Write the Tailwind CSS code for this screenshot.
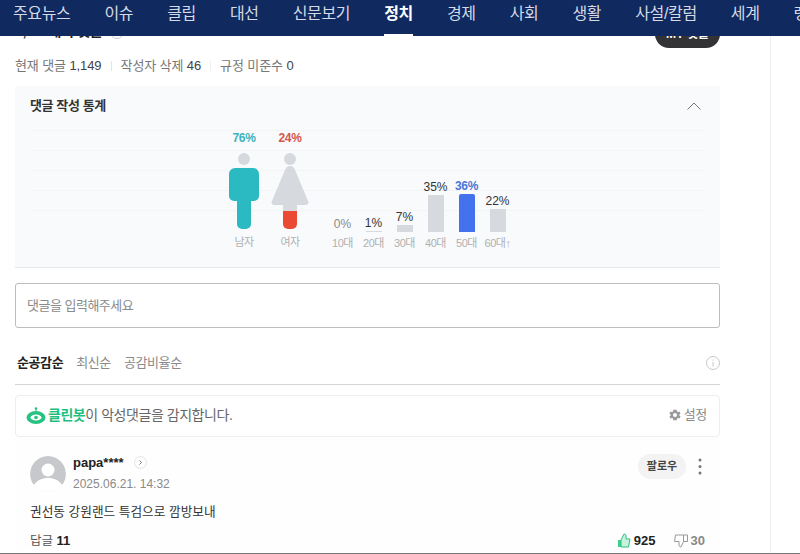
<!DOCTYPE html>
<html lang="ko">
  <head>
    <meta charset="UTF-8" />
    <meta name="viewport" content="width=device-width, initial-scale=1.0" />
    <script src="https://cdn.jsdelivr.net/npm/@tailwindcss/browser@4"></script>
    <title>댓글</title>
  </head>
  <body class="relative h-[554px] w-[800px] overflow-hidden bg-white font-['Liberation_Sans','Noto_Sans_CJK_KR',sans-serif]">
    <!-- top nav sits over the scrolled page -->
    <nav class="fixed top-0 left-0 right-0 z-10 flex h-9 gap-[34px] overflow-hidden whitespace-nowrap bg-[#102a60] pl-[13px] text-[16px] tracking-[-0.35px] text-[#d5dbe6]">
      <a class="pt-[2px]">주요뉴스</a>
      <a class="pt-[2px]">이슈</a>
      <a class="pt-[2px]">클립</a>
      <a class="pt-[2px]">대선</a>
      <a class="pt-[2px]">신문보기</a>
      <a class="border-b-[2px] border-white pt-[2px] font-bold text-white">정치</a>
      <a class="pt-[2px]">경제</a>
      <a class="pt-[2px]">사회</a>
      <a class="pt-[2px]">생활</a>
      <a class="pt-[2px]">사설/칼럼</a>
      <a class="pt-[2px]">세계</a>
      <a class="pt-[2px]">랭킹</a>
    </nav>

    <main class="h-[553px] w-[771px] overflow-hidden border-r border-[#eeeff1] pl-[15px] pr-[50px]">
      <div class="flex h-[48px] items-end justify-between">
        <p class="flex items-center pb-[6px] text-[14px] font-bold tracking-[-0.3px] text-[#222]">1,149개의 댓글
          <svg class="ml-[8px]" width="14" height="14" viewBox="0 0 14 14" fill="none" stroke="#ccc"><circle cx="7" cy="7" r="6.500" /></svg>
        </p>
        <button class="flex h-[28px] w-[65px] items-center justify-center rounded-full bg-[#333335] text-[12px] font-bold text-white">MY 댓글</button>
      </div>

      <div class="mt-[9px] flex h-[18px] items-center text-[13px] tracking-[-0.1px] text-[#777]">
        <span>현재 댓글 <b class="font-normal text-[#444]">1,149</b></span>
        <i class="mx-[9px] h-[10px] w-px bg-[#e3e3e3]"></i>
        <span>작성자 삭제 <b class="font-normal text-[#444]">46</b></span>
        <i class="mx-[9px] h-[10px] w-px bg-[#eeeeee]"></i>
        <span>규정 미준수 <b class="font-normal text-[#444]">0</b></span>
      </div>

      <section class="mt-[11px] h-[182px] border-b border-[#e6e8eb] bg-[#f9fafc] px-[15px]">
        <div class="flex h-[40px] items-center justify-between pr-[4px]">
          <h2 class="text-[13px] font-bold tracking-[-0.4px] text-[#333]">댓글 작성 통계</h2>
          <svg width="14" height="8" viewBox="0 0 14 8" fill="none" stroke="#777" stroke-width="1"><path d="M0.5 7.5 7 1l6.500 6.500" /></svg>
        </div>

        <div class="flex h-[125px] bg-[repeating-linear-gradient(to_bottom,transparent_0,transparent_4px,#f2f4f6_4px,#f2f4f6_5px,transparent_5px,transparent_20px)] bg-[length:100%_85px] bg-no-repeat pl-[191px]">
          <!-- gender figures -->
          <div class="flex w-[46px] flex-col items-center">
            <span class="mt-[5px] text-[12px] leading-[14px] font-bold tracking-[-0.3px] text-[#3ab3bd]">76%</span>
            <svg class="mt-[7px]" width="32" height="78" viewBox="0 0 32 78">
              <circle cx="16" cy="7" r="6" fill="#d6d9de" />
              <path d="M7 16h18a6 6 0 0 1 6 6v22a5 5 0 0 1-5 5h-3v23a5 5 0 0 1-5 5h-4a5 5 0 0 1-5-5V49H6a5 5 0 0 1-5-5V22a6 6 0 0 1 6-6z" fill="#2bb9c2" />
            </svg>
            <span class="mt-[4px] text-[11px] tracking-[-0.5px] text-[#b0b0b0]">남자</span>
          </div>
          <div class="flex w-[46px] flex-col items-center">
            <span class="mt-[5px] text-[12px] leading-[14px] font-bold tracking-[-0.3px] text-[#d4574a]">24%</span>
            <svg class="mt-[7px]" width="38" height="78" viewBox="0 0 38 78">
              <circle cx="19" cy="7" r="6" fill="#d6d9de" />
              <path d="M19 14c3 0 4.500 2 5.500 5L37 49a2.500 2.500 0 0 1-2 4h-9v6H12v-6H3a2.500 2.500 0 0 1-2-4l12.500-30c1-3 2.500-5 5.500-5z" fill="#d6d9de" />
              <path d="M12 59h14v13a5 5 0 0 1-5 5h-4a5 5 0 0 1-5-5z" fill="#ea4a34" />
            </svg>
            <span class="mt-[4px] text-[11px] tracking-[-0.5px] text-[#b0b0b0]">여자</span>
          </div>

          <!-- age bars -->
          <div class="ml-[14px] flex h-[125px] items-end">
            <div class="flex w-[31px] flex-col items-center">
              <span class="mb-[1px] text-[12px] leading-[14px] text-[#8a8a8a]">0%</span>
              <span class="mt-[4px] text-[11px] leading-[15px] tracking-[-0.5px] text-[#b0b0b0]">10대</span>
            </div>
            <div class="flex w-[31px] flex-col items-center">
              <span class="mb-[1px] text-[12px] leading-[14px] text-[#333]">1%</span>
              <i class="h-px w-[16px] bg-[#d6d9de]"></i>
              <span class="mt-[4px] text-[11px] leading-[15px] tracking-[-0.5px] text-[#b0b0b0]">20대</span>
            </div>
            <div class="flex w-[31px] flex-col items-center">
              <span class="mb-[1px] text-[12px] leading-[14px] text-[#333]">7%</span>
              <i class="h-[7px] w-[16px] bg-[#d6d9de]"></i>
              <span class="mt-[4px] text-[11px] leading-[15px] tracking-[-0.5px] text-[#b0b0b0]">30대</span>
            </div>
            <div class="flex w-[31px] flex-col items-center">
              <span class="mb-[1px] text-[12px] leading-[14px] text-[#333]">35%</span>
              <i class="h-[37px] w-[16px] rounded-t-[1px] bg-[#d6d9de]"></i>
              <span class="mt-[4px] text-[11px] leading-[15px] tracking-[-0.5px] text-[#b0b0b0]">40대</span>
            </div>
            <div class="flex w-[31px] flex-col items-center">
              <span class="mb-[1px] text-[12px] leading-[14px] font-bold tracking-[-0.3px] text-[#4a76d6]">36%</span>
              <i class="h-[38px] w-[16px] rounded-t-[2px] bg-[#4472ee]"></i>
              <span class="mt-[4px] text-[11px] leading-[15px] tracking-[-0.5px] text-[#b0b0b0]">50대</span>
            </div>
            <div class="flex w-[31px] flex-col items-center">
              <span class="mb-[1px] text-[12px] leading-[14px] text-[#333]">22%</span>
              <i class="h-[23px] w-[16px] bg-[#d6d9de]"></i>
              <span class="mt-[4px] whitespace-nowrap text-[11px] leading-[15px] tracking-[-0.5px] text-[#b0b0b0]">60대↑</span>
            </div>
          </div>
        </div>
      </section>

      <div class="mt-[15px] flex h-[45px] items-center rounded-[3px] border border-[#bdbdbd] px-[11px] text-[13px] tracking-[-0.5px] text-[#8a8a8a]">댓글을 입력해주세요</div>

      <div class="mt-[20px] flex h-[37px] items-center border-b border-[#d4d4d4] pb-[6px] pl-[2px] text-[13px] tracking-[-0.4px] text-[#8a8a8a]">
        <span class="font-bold text-[#222]">순공감순</span>
        <span class="ml-[13px]">최신순</span>
        <span class="ml-[13px]">공감비율순</span>
        <svg class="ml-auto" width="14" height="14" viewBox="0 0 14 14" fill="none" stroke="#c8c8c8"><circle cx="7" cy="7" r="6.500" /><path d="M7 6v4.500M7 3.500v1.200" /></svg>
      </div>

      <div class="mt-[10px] flex h-[42px] items-center justify-between rounded-[4px] border border-[#eeeeee] pb-[2px] pl-[10px] pr-[12px]">
        <div class="flex items-center text-[14px] tracking-[-0.45px] text-[#666]">
          <svg class="mr-[2px]" width="20" height="17" viewBox="0 0 20 17">
            <circle cx="10" cy="1.500" r="1.300" fill="#26c281" />
            <path d="M9.500 2h1v3h-1z" fill="#26c281" />
            <ellipse cx="10" cy="10.500" rx="9.500" ry="6.500" fill="#26c281" />
            <ellipse cx="10" cy="10.500" rx="5.500" ry="3" fill="#fff" />
            <circle cx="10" cy="10.500" r="1.800" fill="#26c281" />
          </svg>
          <b class="text-[#1fbf7d]">클린봇</b><span>이 악성댓글을 감지합니다.</span>
        </div>
        <div class="flex items-center gap-[2px] text-[13px] tracking-[-0.3px] text-[#888]">
          <svg width="14" height="14" viewBox="0 0 24 24" fill="#999"><path d="M19.400 13a7.500 7.500 0 0 0 0-2l2.100-1.600-2-3.500-2.500 1a7.500 7.500 0 0 0-1.700-1L15 3.200h-6l-.4 2.700a7.500 7.500 0 0 0-1.700 1l-2.500-1-2 3.500L4.500 11a7.500 7.500 0 0 0 0 2l-2.100 1.600 2 3.500 2.500-1a7.500 7.500 0 0 0 1.700 1l.4 2.700h6l.4-2.700a7.500 7.500 0 0 0 1.700-1l2.500 1 2-3.500zM12 15.500a3.500 3.500 0 1 1 0-7 3.500 3.500 0 0 1 0 7z" /></svg>
          설정
        </div>
      </div>

      <article class="bg-[#fefefe] px-[15px] pt-[19px]">
        <div class="flex items-start justify-between">
          <div class="flex gap-[7px]">
            <svg class="rounded-full" width="36" height="36" viewBox="0 0 36 36">
              <circle cx="18" cy="18" r="18" fill="#c6c8cc" />
              <circle cx="18" cy="14" r="6.500" fill="#fff" />
              <path d="M3 30c4-6 9-8 15-8s11 2 15 8a18 18 0 0 1-30 0z" fill="#fff" />
            </svg>
            <div class="-mt-px">
              <p class="flex items-center text-[13px] leading-[15px] font-bold text-[#222]">papa****
                <svg class="ml-[10px]" width="13" height="13" viewBox="0 0 13 13" fill="none"><circle cx="6.500" cy="6.500" r="6" stroke="#e3e3e3" /><path d="M5.500 4.500l2 2-2 2" stroke="#777" /></svg>
              </p>
              <p class="mt-[7px] text-[12px] leading-[14px] text-[#8a8a8a]">2025.06.21. 14:32</p>
            </div>
          </div>
          <div class="-mt-[2px] flex items-center">
            <button class="h-[25px] w-[48px] rounded-full bg-[#f3f3f3] text-[11px] font-bold text-[#444]">팔로우</button>
            <svg class="ml-[12px] mr-[3px]" width="4" height="17" viewBox="0 0 4 17" fill="#777"><circle cx="2" cy="2" r="1.500" /><circle cx="2" cy="8.500" r="1.500" /><circle cx="2" cy="15" r="1.500" /></svg>
          </div>
        </div>
        <p class="mt-[12px] text-[12.700px] leading-[16px] text-[#333]">권선동 강원랜드 특검으로 깜방보내</p>
        <div class="mt-[11px] flex items-center justify-between">
          <span class="text-[12.500px] text-[#555]">답글 <b class="text-[13px] text-[#222]">11</b></span>
          <div class="flex items-center text-[13px] font-bold">
            <svg width="14" height="15" viewBox="0 0 14 15">
              <path d="M1 7h3v7H1z" fill="#3ecf8e" />
              <path d="M4 7l3-6c1.500 0 2 1 2 2v3h4l-1.500 8H4z" fill="#c9f2de" stroke="#26c281" />
            </svg>
            <span class="ml-[3px] text-[#222]">925</span>
            <svg class="ml-[18px]" width="14" height="15" viewBox="0 0 14 15" fill="none" stroke="#999"><path d="M9.500 2H1.500L.5 8.500h4.500v3.500c0 1 .7 2 2 2l2.500-5.500zM9.500 2h4v6.500h-4" /></svg>
            <span class="ml-[3px] text-[#888]">30</span>
          </div>
        </div>
      </article>
    </main>
    <div class="h-px bg-[#777]"></div>
  </body>
</html>
